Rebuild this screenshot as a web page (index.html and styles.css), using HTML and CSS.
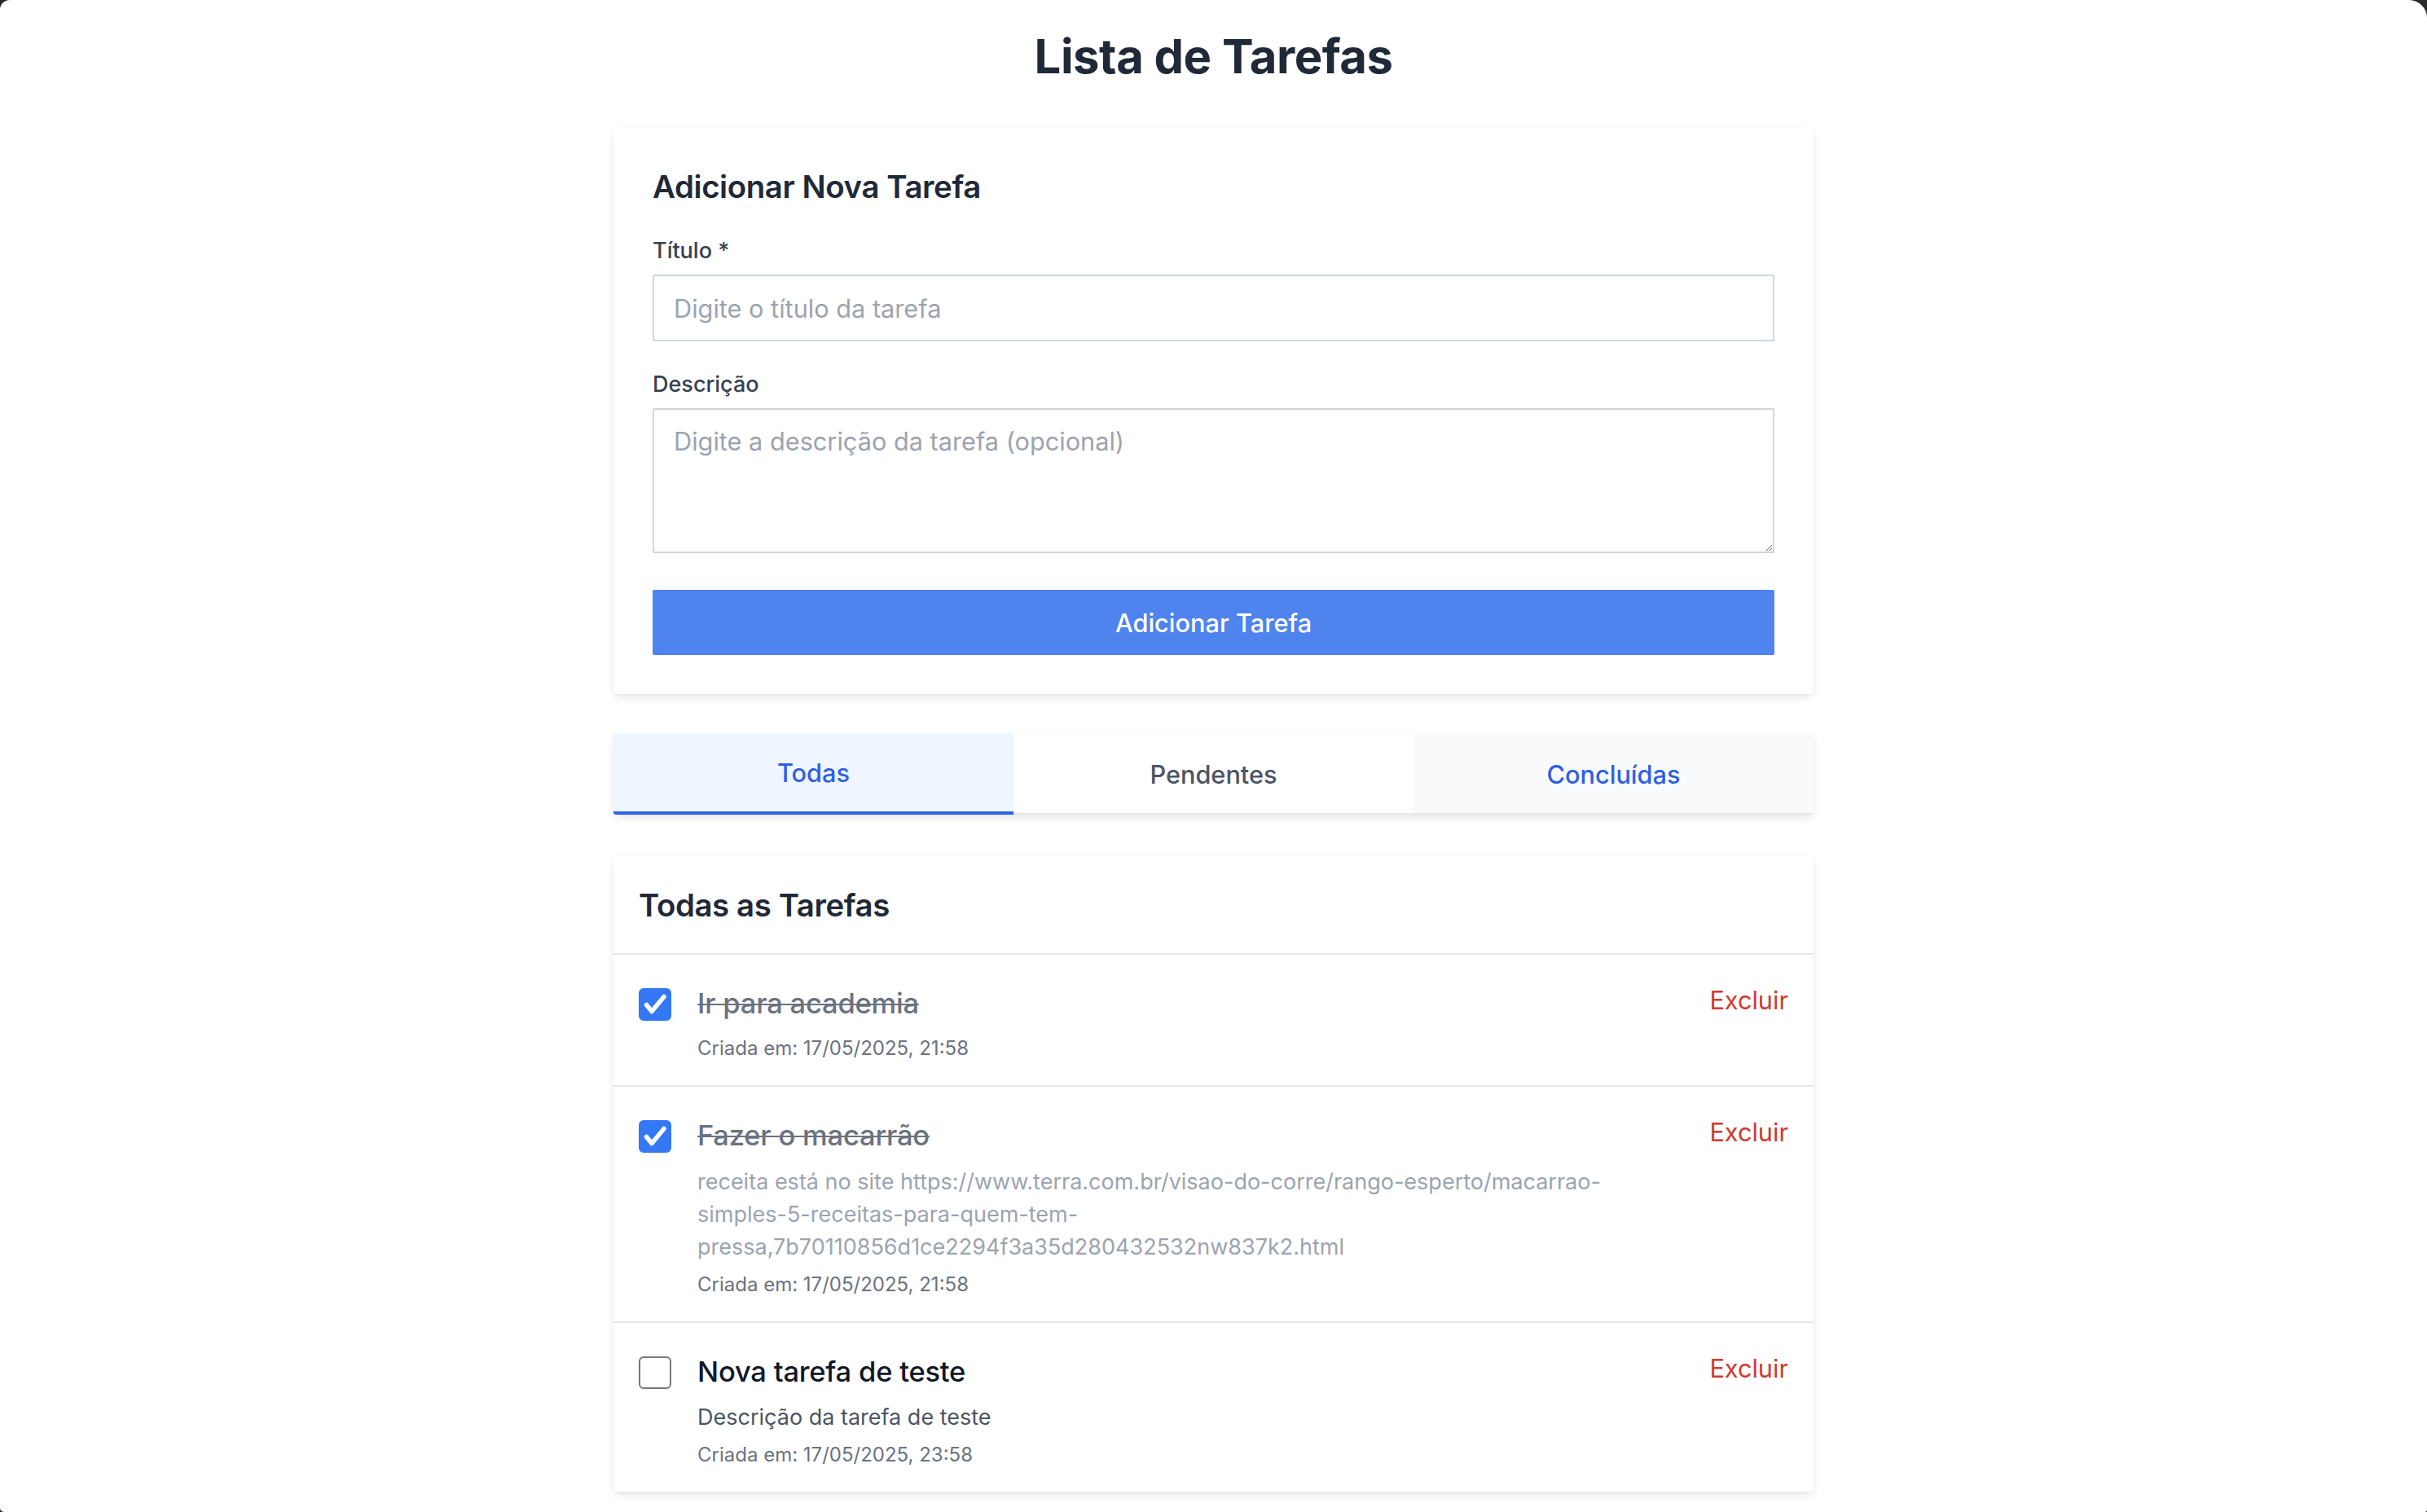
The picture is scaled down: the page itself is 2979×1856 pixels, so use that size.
FILE: index.html
```html
<!DOCTYPE html>
<html lang="pt-BR">
<head>
<meta charset="utf-8">
<title>Lista de Tarefas</title>
<link rel="stylesheet" href="styles.css">
</head>
<body>
<div class="window-corners"></div>
<main class="container">
  <h1 class="page-title">Lista de Tarefas</h1>

  <section class="card form-card">
    <h2 class="card-title">Adicionar Nova Tarefa</h2>
    <label class="field-label" for="titulo">Título *</label>
    <input id="titulo" class="text-input" type="text" placeholder="Digite o título da tarefa">
    <label class="field-label" for="descricao">Descrição</label>
    <textarea id="descricao" class="text-area" placeholder="Digite a descrição da tarefa (opcional)"></textarea>
    <button class="primary-btn" type="button">Adicionar Tarefa</button>
  </section>

  <nav class="tabs">
    <div class="tab tab-active">Todas</div>
    <div class="tab tab-plain">Pendentes</div>
    <div class="tab tab-muted">Concluídas</div>
  </nav>

  <section class="card list-card">
    <h2 class="list-title">Todas as Tarefas</h2>
    <ul class="task-list">
      <li class="task">
        <div class="task-main">
          <span class="checkbox checked"><svg viewBox="0 0 40 40" width="40" height="40"><polyline points="9.5,20.5 16,28.5 31,10.5" fill="none" stroke="#fff" stroke-width="5.5" stroke-linecap="round" stroke-linejoin="round"/></svg></span>
          <div class="task-body">
            <div class="task-title done">Ir para academia</div>
            <div class="task-date">Criada em: 17/05/2025, 21:58</div>
          </div>
        </div>
        <button class="delete-btn" type="button">Excluir</button>
      </li>
      <li class="task">
        <div class="task-main">
          <span class="checkbox checked"><svg viewBox="0 0 40 40" width="40" height="40"><polyline points="9.5,20.5 16,28.5 31,10.5" fill="none" stroke="#fff" stroke-width="5.5" stroke-linecap="round" stroke-linejoin="round"/></svg></span>
          <div class="task-body">
            <div class="task-title done">Fazer o macarrão</div>
            <div class="task-desc done-desc">receita está no site https://www.terra.com.br/visao-do-corre/rango-esperto/macarrao-simples-5-receitas-para-quem-tem-pressa,7b70110856d1ce2294f3a35d280432532nw837k2.html</div>
            <div class="task-date after-desc">Criada em: 17/05/2025, 21:58</div>
          </div>
        </div>
        <button class="delete-btn" type="button">Excluir</button>
      </li>
      <li class="task">
        <div class="task-main">
          <span class="checkbox"></span>
          <div class="task-body">
            <div class="task-title">Nova tarefa de teste</div>
            <div class="task-desc">Descrição da tarefa de teste</div>
            <div class="task-date after-desc">Criada em: 17/05/2025, 23:58</div>
          </div>
        </div>
        <button class="delete-btn" type="button">Excluir</button>
      </li>
    </ul>
  </section>
</main>
</body>
</html>
```
FILE: styles.css
```css
* { box-sizing: border-box; }

html, body {
  margin: 0;
  padding: 0;
  background: #ffffff;
}

body {
  font-family: Inter, "Noto Sans", "Liberation Sans", sans-serif;
  color: #1f2937;
  overflow: hidden;
}

.window-corners {
  position: fixed;
  inset: 0;
  border-radius: 12px 22px 3px 5px;
  box-shadow: 0 0 0 40px #2a2a2a;
  pointer-events: none;
  z-index: 10;
}

.container {
  width: 1473px;
  margin: 0 auto;
  padding-top: 34px;
  padding-bottom: 40px;
}

.page-title {
  margin: 0 0 52px;
  font-size: 58px;
  line-height: 70px;
  font-weight: 700;
  text-align: center;
  color: #1f2937;
  letter-spacing: -0.5px;
}

.card {
  background: #ffffff;
  border-radius: 3px;
  box-shadow: 0 6px 14px -2px rgba(0, 0, 0, 0.08), 0 2px 6px -1px rgba(0, 0, 0, 0.06), 0 0 2px rgba(0, 0, 0, 0.05);
}

.form-card {
  display: flex;
  flex-direction: column;
  padding: 46px 48px 48px;
  margin-bottom: 48px;
}

.card-title {
  margin: 0 0 33px;
  font-size: 38.4px;
  line-height: 54px;
  font-weight: 600;
  color: #1f2937;
  letter-spacing: -0.4px;
}

.field-label {
  display: block;
  font-size: 27px;
  line-height: 38px;
  font-weight: 500;
  color: #374151;
  margin-bottom: 10px;
}

.text-input,
.text-area {
  display: block;
  width: 100%;
  border: 2px solid #d1d5db;
  border-radius: 2px;
  font-family: inherit;
  font-size: 30.7px;
  line-height: 46px;
  color: #111827;
  background: #fff;
  padding: 0 24px;
  outline: none;
  margin: 0;
}

.text-input {
  height: 82px;
  margin-bottom: 34px;
}

.text-area {
  height: 178px;
  padding-top: 16px;
  resize: vertical;
  margin-bottom: 45px;
}

.text-input::placeholder,
.text-area::placeholder {
  color: #9ca3af;
}

.primary-btn {
  display: block;
  width: 100%;
  height: 80px;
  border: 0;
  border-radius: 2px;
  background: #4f83ee;
  color: #ffffff;
  font-family: inherit;
  font-size: 30.7px;
  font-weight: 500;
  margin: 0;
}

.tabs {
  display: grid;
  grid-template-columns: 1fr 1fr 1fr;
  height: 100px;
  margin-bottom: 51px;
  background: #fff;
  box-shadow: 0 6px 14px -2px rgba(0, 0, 0, 0.08), 0 2px 6px -1px rgba(0, 0, 0, 0.06), inset 0 -2px 0 #e5e7eb;
  border-radius: 3px;
  overflow: hidden;
}

.tab {
  display: flex;
  align-items: center;
  justify-content: center;
  font-size: 30.7px;
  font-weight: 500;
  padding-top: 1px;
}

.tab-active {
  background: #eff6ff;
  color: #2f5fe3;
  box-shadow: inset 0 -4px 0 #2f62e6;
  padding-bottom: 4px;
}

.tab-plain {
  background: #ffffff;
  color: #4b5563;
  box-shadow: inset 0 -2px 0 #e5e7eb;
}

.tab-muted {
  background: #f9fafb;
  color: #2f5fe3;
  box-shadow: inset 0 -2px 0 #e5e7eb;
}

.list-card {
  overflow: hidden;
}

.list-title {
  margin: 0;
  padding: 33px 31px 32px;
  font-size: 38.4px;
  line-height: 54px;
  font-weight: 600;
  color: #1f2937;
  border-bottom: 2px solid #e5e7eb;
  letter-spacing: -0.4px;
}

.task-list {
  list-style: none;
  margin: 0;
  padding: 0;
}

.task {
  display: flex;
  align-items: flex-start;
  justify-content: space-between;
  gap: 31px;
  padding: 33px 31px 30px 31px;
  border-bottom: 2px solid #e5e7eb;
}

.task:last-child {
  border-bottom: 0;
}

.task-main {
  display: flex;
  align-items: flex-start;
  gap: 32px;
  flex: 1;
  min-width: 0;
}

.checkbox {
  flex: 0 0 40px;
  width: 40px;
  height: 40px;
  margin-top: 8px;
  border-radius: 6px;
  border: 2px solid #767676;
  background: #fff;
  display: flex;
  align-items: center;
  justify-content: center;
}

.checkbox.checked {
  background: #3478f6;
  border-color: #3478f6;
}

.checkbox svg {
  display: block;
  flex: none;
}

.task-body {
  flex: 1;
  min-width: 0;
}

.task-title {
  font-size: 34.5px;
  line-height: 54px;
  font-weight: 500;
  color: #111827;
  letter-spacing: -0.2px;
}

.task-title.done {
  color: #6b7280;
  text-decoration: line-through;
  text-decoration-thickness: 2px;
}

.task-desc {
  margin-top: 9px;
  font-size: 27px;
  line-height: 40px;
  color: #4b5563;
  overflow-wrap: break-word;
}

.task-desc.done-desc {
  color: #9ca3af;
  margin-top: 10px;
  margin-bottom: 1px;
}

.task-date {
  margin-top: 12px;
  font-size: 24px;
  line-height: 31px;
  color: #6b7280;
}

.task-date.after-desc {
  margin-top: 10px;
}

.delete-btn {
  flex: none;
  border: 0;
  background: transparent;
  padding: 0;
  margin: 0;
  font-family: inherit;
  font-size: 30.7px;
  line-height: 46px;
  color: #d03a31;
}
```
